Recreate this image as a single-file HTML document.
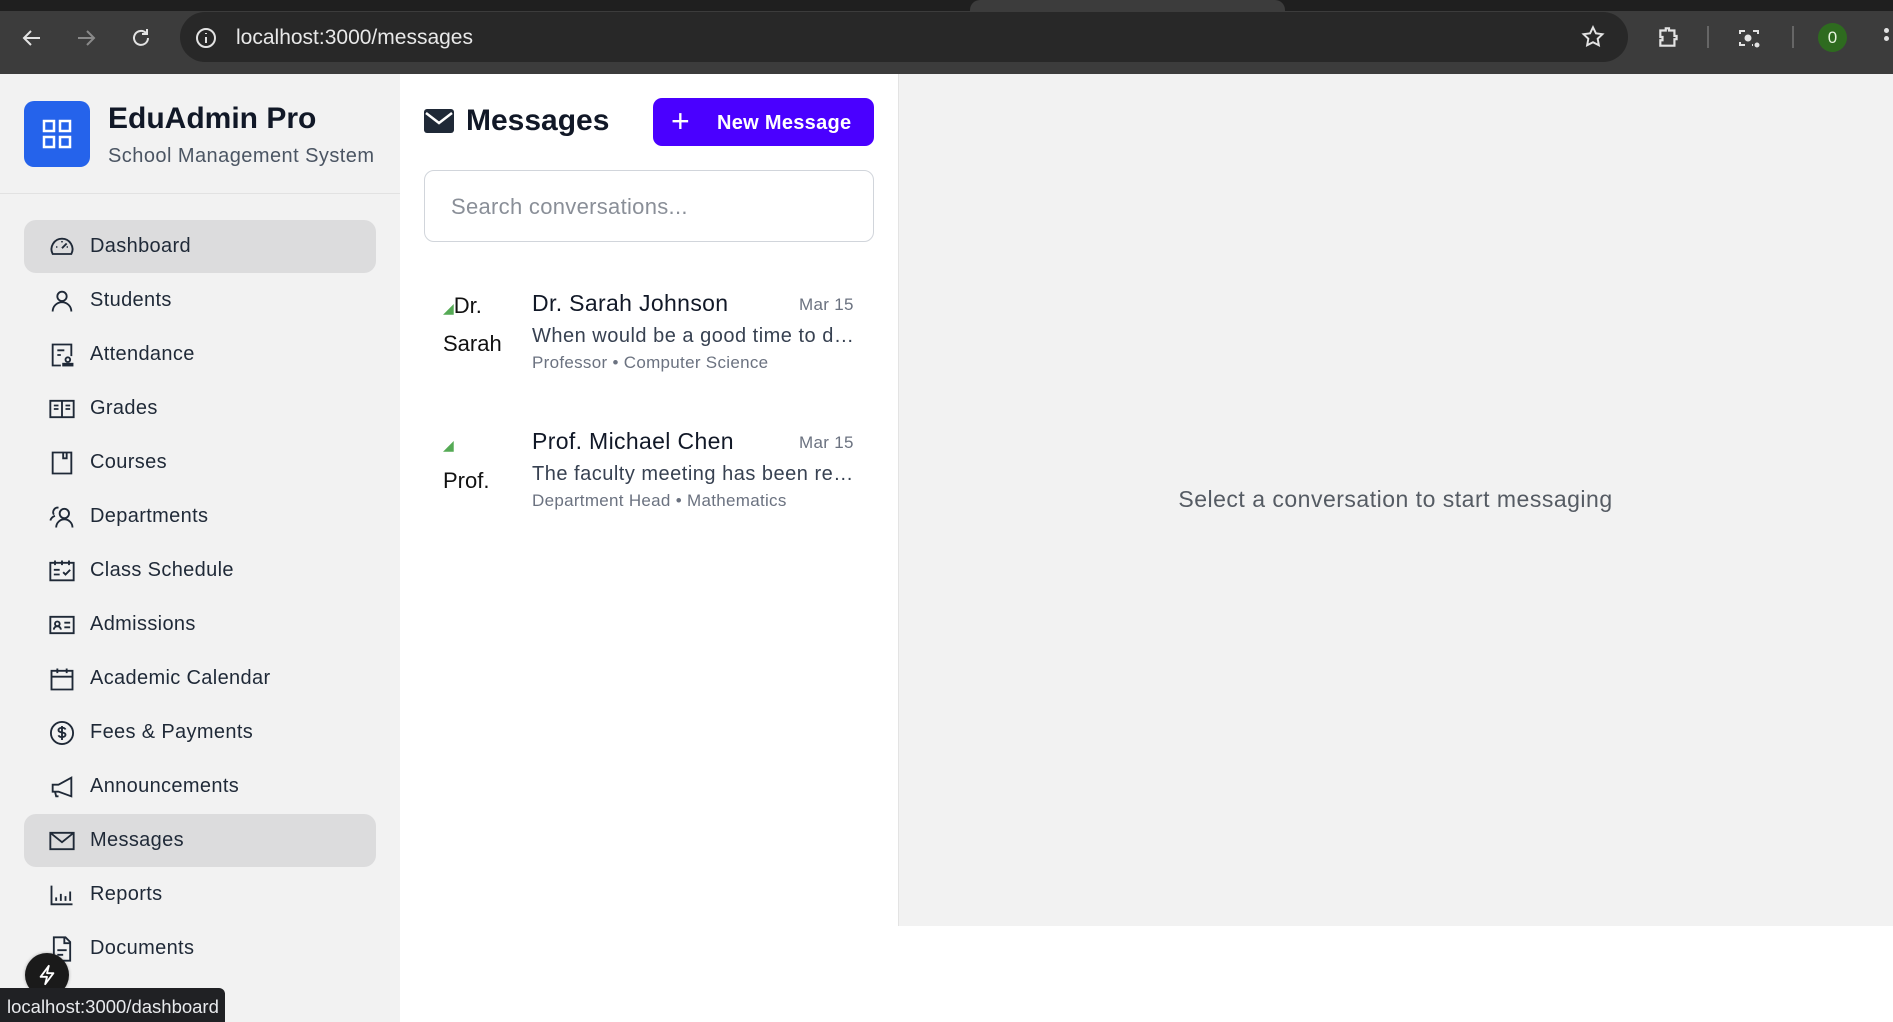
<!DOCTYPE html>
<html><head><meta charset="utf-8"><style>
*{box-sizing:border-box;margin:0;padding:0}
body{width:1893px;height:1022px;overflow:hidden;font-family:"Liberation Sans",Arial,sans-serif;background:#fff;position:relative}
.abs{position:absolute}
.top{left:0;top:0;width:1893px;height:74px;background:#3c3c3c}
.strip{left:0;top:0;width:1893px;height:11px;background:#1f1f1f}
.tab{left:970px;top:0;width:315px;height:12px;background:#3c3c3c;border-radius:10px 10px 0 0}
.addr{left:180px;top:12px;width:1448px;height:50px;background:#282828;border-radius:25px}
.side{left:0;top:74px;width:400px;height:948px;background:#f2f2f2}
.logo{left:24px;top:101px;width:66px;height:66px;background:#2563eb;border-radius:10px}
.nav{left:24px;width:352px;height:53px;border-radius:12px}
.nav.act{background:#dcdcdd}
.nt{position:absolute;left:66px;top:15px;font-size:20px;color:#1f2937;letter-spacing:.35px}
.ic{position:absolute;left:24px;top:13px;width:28px;height:28px}
.right{left:898px;top:74px;width:995px;height:852px;background:#f2f2f2;border-left:1px solid #e3e3e3}
.name{font-size:23px;color:#111827;letter-spacing:.35px}
.prev{font-size:20px;color:#374151;letter-spacing:.5px}
.sub{font-size:17px;color:#6b7280;letter-spacing:.3px}
.date{font-size:17px;color:#6b7280;letter-spacing:.3px}
</style></head><body>
<div class="abs top"></div><div class="abs strip"></div><div class="abs tab"></div>
<div class="abs addr"></div>
<svg class="abs" style="left:20px;top:26px" width="24" height="24" viewBox="0 0 24 24" fill="none" stroke="#e3e3e3" stroke-width="2"><path d="M20 12H5M11 5l-7 7 7 7"/></svg>
<svg class="abs" style="left:74px;top:26px" width="24" height="24" viewBox="0 0 24 24" fill="none" stroke="#8a8a8a" stroke-width="2"><path d="M4 12h15M13 5l7 7-7 7"/></svg>
<svg class="abs" style="left:129px;top:26px" width="24" height="24" viewBox="0 0 24 24" fill="none" stroke="#e3e3e3" stroke-width="2"><path d="M19 12a7 7 0 1 1-2-5M18 3v5h-5"/></svg>
<svg class="abs" style="left:194px;top:26px" width="24" height="24" viewBox="0 0 24 24" fill="none" stroke="#e3e3e3" stroke-width="2"><circle cx="12" cy="12" r="9"/><path d="M12 11v6M12 7v1"/></svg>
<div class="abs" style="left:236px;top:26px;font-size:21px;color:#e8e8e8">localhost:3000/messages</div>
<svg class="abs" style="left:1580px;top:24px" width="26" height="26" viewBox="0 0 24 24" fill="none" stroke="#e3e3e3" stroke-width="1.8"><path d="M12 3l2.7 5.6 6 .8-4.4 4.2 1.1 6L12 16.8 6.6 19.6l1.1-6L3.3 9.4l6-.8z"/></svg>
<svg class="abs" style="left:1655px;top:24px" width="28" height="26" viewBox="0 0 24 24" fill="none" stroke="#e3e3e3" stroke-width="2"><path d="M4 6h5V4h3v2h5v5h2v3h-2v6H4v-5h2v-3H4z"/></svg>
<div class="abs" style="left:1707px;top:26px;width:2px;height:22px;background:#666"></div>
<svg class="abs" style="left:1736px;top:26px" width="26" height="24" viewBox="0 0 24 24" fill="none" stroke="#e3e3e3" stroke-width="2"><path d="M3 8V5h5M21 8V5h-5M3 16v3h5M16 19h-1"/><circle cx="11" cy="12" r="2.5" fill="#e3e3e3"/><circle cx="20" cy="19" r="1.5" fill="#e3e3e3"/></svg>
<div class="abs" style="left:1792px;top:26px;width:2px;height:22px;background:#666"></div>
<div class="abs" style="left:1818px;top:23px;width:29px;height:29px;border-radius:50%;background:#2e6b1f;color:#e8f5e0;font-size:17px;text-align:center;line-height:29px">0</div>
<div class="abs" style="left:1884px;top:28px;width:5px;height:5px;border-radius:50%;background:#e3e3e3;box-shadow:0 8px 0 #e3e3e3"></div>

<div class="abs side"></div>
<div class="abs logo"><svg style="position:absolute;left:17px;top:17px" width="32" height="32" viewBox="0 0 32 32" fill="none" stroke="#fff" stroke-width="2.5"><rect x="3" y="3" width="10" height="10"/><rect x="19" y="3" width="10" height="10"/><rect x="3" y="19" width="10" height="10"/><rect x="19" y="19" width="10" height="10"/></svg></div>
<div class="abs" style="left:108px;top:102px;font-size:30px;font-weight:bold;color:#111827">EduAdmin Pro</div>
<div class="abs" style="left:108px;top:145px;font-size:20px;color:#4b5563;letter-spacing:.45px">School Management System</div>
<div class="abs" style="left:0;top:193px;width:400px;height:1px;background:#e2e2e2"></div>

<div class="abs nav act" style="top:220px"><svg class="ic" viewBox="0 0 24 24" fill="none" stroke="#1f2937" stroke-width="1.6"><path d="M4 18a9 9 0 1 1 16 0z"/><path d="M12 13l4-4M7 12h1M12 7v1M17 12h-1"/></svg><span class="nt">Dashboard</span></div>
<div class="abs nav" style="top:274px"><svg class="ic" viewBox="0 0 24 24" fill="none" stroke="#1f2937" stroke-width="1.6"><circle cx="12" cy="8" r="4"/><path d="M4 21a8 8 0 0 1 16 0"/></svg><span class="nt">Students</span></div>
<div class="abs nav" style="top:328px"><svg class="ic" viewBox="0 0 24 24" fill="none" stroke="#1f2937" stroke-width="1.6"><path d="M11 21H4V3h16v10M8 8h6M8 12h3"/><circle cx="17" cy="16" r="2"/><path d="M13 21h8v-1.5h-8z"/></svg><span class="nt">Attendance</span></div>
<div class="abs nav" style="top:382px"><svg class="ic" viewBox="0 0 24 24" fill="none" stroke="#1f2937" stroke-width="1.6"><path d="M2 5h20v14H2zM12 5v14M5 9h4M5 12h4M15 9h4M15 12h4"/></svg><span class="nt">Grades</span></div>
<div class="abs nav" style="top:436px"><svg class="ic" viewBox="0 0 24 24" fill="none" stroke="#1f2937" stroke-width="1.6"><path d="M4 3h16v18H4zM13 3v5h3V3"/></svg><span class="nt">Courses</span></div>
<div class="abs nav" style="top:490px"><svg class="ic" viewBox="0 0 24 24" fill="none" stroke="#1f2937" stroke-width="1.6"><circle cx="14" cy="9" r="4"/><path d="M7 21a7 7 0 0 1 14 0M9 4a4 4 0 0 0-4 6M2 15a6 6 0 0 1 4-4"/></svg><span class="nt">Departments</span></div>
<div class="abs nav" style="top:544px"><svg class="ic" viewBox="0 0 24 24" fill="none" stroke="#1f2937" stroke-width="1.6"><path d="M2 5h20v15H2zM6 3v4M12 3v4M18 3v4M5 11h5M5 15h5M13 13l2 2 4-4"/></svg><span class="nt">Class Schedule</span></div>
<div class="abs nav" style="top:598px"><svg class="ic" viewBox="0 0 24 24" fill="none" stroke="#1f2937" stroke-width="1.6"><path d="M2 5h20v14H2z"/><circle cx="8" cy="11" r="2"/><path d="M5 16a3 3 0 0 1 6 0M14 10h5M14 14h5"/></svg><span class="nt">Admissions</span></div>
<div class="abs nav" style="top:652px"><svg class="ic" viewBox="0 0 24 24" fill="none" stroke="#1f2937" stroke-width="1.6"><path d="M3 5h18v16H3zM3 10h18M8 3v4M16 3v4"/></svg><span class="nt">Academic Calendar</span></div>
<div class="abs nav" style="top:706px"><svg class="ic" viewBox="0 0 24 24" fill="none" stroke="#1f2937" stroke-width="1.6"><circle cx="12" cy="12" r="9.5"/><path d="M15 9a3 2 0 0 0-3-1.5c-2 0-3 1-3 2s1 1.7 3 2 3 1 3 2-1 2-3 2a3 2 0 0 1-3-1.5M12 6v12"/></svg><span class="nt">Fees &amp; Payments</span></div>
<div class="abs nav" style="top:760px"><svg class="ic" viewBox="0 0 24 24" fill="none" stroke="#1f2937" stroke-width="1.6"><path d="M20 4v16L9 16H4v-6h5z M6 16l1 4h2"/></svg><span class="nt">Announcements</span></div>
<div class="abs nav act" style="top:814px"><svg class="ic" viewBox="0 0 24 24" fill="none" stroke="#1f2937" stroke-width="1.6"><path d="M2 5h20v14H2zM2 5l10 8 10-8"/></svg><span class="nt">Messages</span></div>
<div class="abs nav" style="top:868px"><svg class="ic" viewBox="0 0 24 24" fill="none" stroke="#1f2937" stroke-width="1.6"><path d="M3 4v16h18M7 17v-3M11 17v-6M15 17v-4M19 17v-8"/></svg><span class="nt">Reports</span></div>
<div class="abs nav" style="top:922px"><svg class="ic" viewBox="0 0 24 24" fill="none" stroke="#1f2937" stroke-width="1.6"><path d="M5 2h10l4 4v16H5zM14 2v5h5M8 13h8M8 17h5"/></svg><span class="nt">Documents</span></div>

<div class="abs" style="left:25px;top:953px;width:44px;height:44px;border-radius:50%;background:#1a1a1a;box-shadow:0 0 3px rgba(0,0,0,.3)"><svg style="position:absolute;left:11px;top:10px" width="22" height="24" viewBox="0 0 24 24" fill="none" stroke="#fff" stroke-width="2" stroke-linejoin="round"><path d="M14 2L5 14h7l-2 8 9-12h-7z"/></svg></div>
<div class="abs" style="left:0;top:988px;width:225px;height:34px;background:#202124;border-radius:0 6px 0 0;color:#e8eaed;font-size:18.5px;padding:8px 0 0 7px">localhost:3000/dashboard</div>

<svg class="abs" style="left:424px;top:109px" width="30" height="24" viewBox="0 0 30 24"><rect x="0" y="0" width="30" height="24" rx="3" fill="#1f2937"/><path d="M2 4l13 10 13-10" fill="none" stroke="#fff" stroke-width="2.5"/></svg>
<div class="abs" style="left:466px;top:104px;font-size:30px;font-weight:bold;color:#111827">Messages</div>
<div class="abs" style="left:653px;top:98px;width:221px;height:48px;background:#4a00ff;border-radius:9px;color:#fff;font-size:20px;font-weight:bold"><span style="position:absolute;left:18px;top:5px;font-size:32px;font-weight:normal;line-height:36px">+</span><span style="position:absolute;left:64px;top:14px;letter-spacing:.3px">New Message</span></div>
<div class="abs" style="left:424px;top:170px;width:450px;height:72px;border:1.5px solid #d1d5db;border-radius:10px;font-size:22px;color:#8a8f98;padding:23px 0 0 26px;letter-spacing:.3px">Search conversations...</div>

<div class="abs" style="left:443px;top:288px;font-size:22px;color:#111;line-height:35px;width:70px"><span style="font-size:14px;color:#5a5">◢</span>Dr.<br>Sarah</div>
<div class="abs name" style="left:532px;top:290px">Dr. Sarah Johnson</div>
<div class="abs date" style="left:799px;top:295px">Mar 15</div>
<div class="abs prev" style="left:532px;top:325px">When would be a good time to d…</div>
<div class="abs sub" style="left:532px;top:353px">Professor • Computer Science</div>

<div class="abs" style="left:443px;top:425px;font-size:22px;color:#111;line-height:35px;width:70px"><span style="font-size:14px;color:#5a5">◢</span><br>Prof.</div>
<div class="abs name" style="left:532px;top:428px">Prof. Michael Chen</div>
<div class="abs date" style="left:799px;top:433px">Mar 15</div>
<div class="abs prev" style="left:532px;top:463px">The faculty meeting has been re…</div>
<div class="abs sub" style="left:532px;top:491px">Department Head • Mathematics</div>

<div class="abs right"></div>
<div class="abs" style="left:898px;top:486px;width:995px;text-align:center;font-size:23px;color:#555b63;letter-spacing:.5px">Select a conversation to start messaging</div>
</body></html>
